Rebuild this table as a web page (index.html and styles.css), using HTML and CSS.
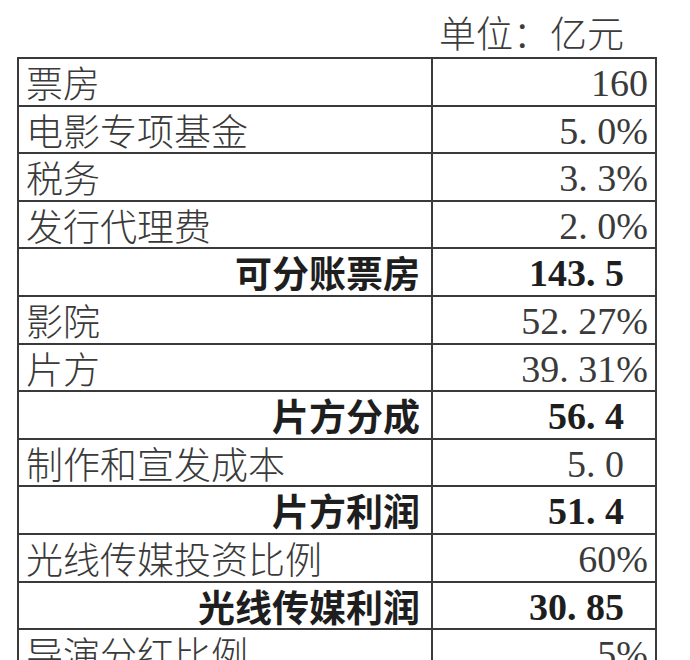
FILE: index.html
```html
<!DOCTYPE html>
<html lang="zh-CN">
<head>
<meta charset="utf-8">
<link rel="stylesheet" href="styles.css">
</head>
<body>
<div class="page">
  <div class="unit">单位：亿元</div>
  <table class="sheet">
    <colgroup><col class="c1"><col class="c2"></colgroup>
    <tr><td class="lbl">票房</td><td class="val">160</td></tr>
    <tr><td class="lbl">电影专项基金</td><td class="val">5. 0%</td></tr>
    <tr><td class="lbl">税务</td><td class="val">3. 3%</td></tr>
    <tr><td class="lbl">发行代理费</td><td class="val">2. 0%</td></tr>
    <tr class="sum"><td class="lbl">可分账票房</td><td class="val">143. 5</td></tr>
    <tr><td class="lbl">影院</td><td class="val">52. 27%</td></tr>
    <tr><td class="lbl">片方</td><td class="val">39. 31%</td></tr>
    <tr class="sum"><td class="lbl">片方分成</td><td class="val">56. 4</td></tr>
    <tr><td class="lbl">制作和宣发成本</td><td class="val mid">5. 0</td></tr>
    <tr class="sum"><td class="lbl">片方利润</td><td class="val">51. 4</td></tr>
    <tr><td class="lbl">光线传媒投资比例</td><td class="val">60%</td></tr>
    <tr class="sum"><td class="lbl">光线传媒利润</td><td class="val">30. 85</td></tr>
    <tr><td class="lbl">导演分红比例</td><td class="val">5%</td></tr>
  </table>
</div>
</body>
</html>
```

FILE: styles.css
```css
html, body {
  margin: 0;
  padding: 0;
  background: #ffffff;
  overflow: hidden;
}
.page {
  width: 690px;
  height: 660px;
  padding-left: 17px;
  box-sizing: border-box;
  overflow: hidden;
}
.unit {
  height: 57px;
  box-sizing: border-box;
  padding: 12px 0 0 422px;
  font-family: "Noto Sans CJK SC", sans-serif;
  font-weight: 300;
  font-size: 37px;
  line-height: 40px;
  color: #3c3c3c;
  white-space: nowrap;
}
.sheet {
  border-collapse: collapse;
  table-layout: fixed;
  width: 638px;
}
.c1 { width: 414px; }
.c2 { width: 224px; }
.sheet td {
  border: 2px solid #3a3a3a;
  height: 47.6px;
  padding: 0;
  box-sizing: border-box;
  white-space: nowrap;
  color: #3a3a3a;
  vertical-align: top;
}
.lbl {
  font-family: "Noto Sans CJK SC", sans-serif;
  font-weight: 300;
  font-size: 37px;
  line-height: 42px;
  padding-left: 7px !important;
  padding-top: 2px !important;
}
.val {
  font-family: "Liberation Serif", "Noto Sans CJK SC", serif;
  font-size: 38px;
  line-height: 40px;
  text-align: right;
  padding-right: 7px !important;
  padding-top: 4px !important;
}
.sum td {
  color: #1e1e1e;
  font-weight: 700;
}
.sum .lbl {
  text-align: right;
  padding-right: 11px !important;
  padding-left: 0 !important;
}
.sum .val {
  padding-right: 31px !important;
}
.val.mid {
  padding-right: 31px !important;
}
```
